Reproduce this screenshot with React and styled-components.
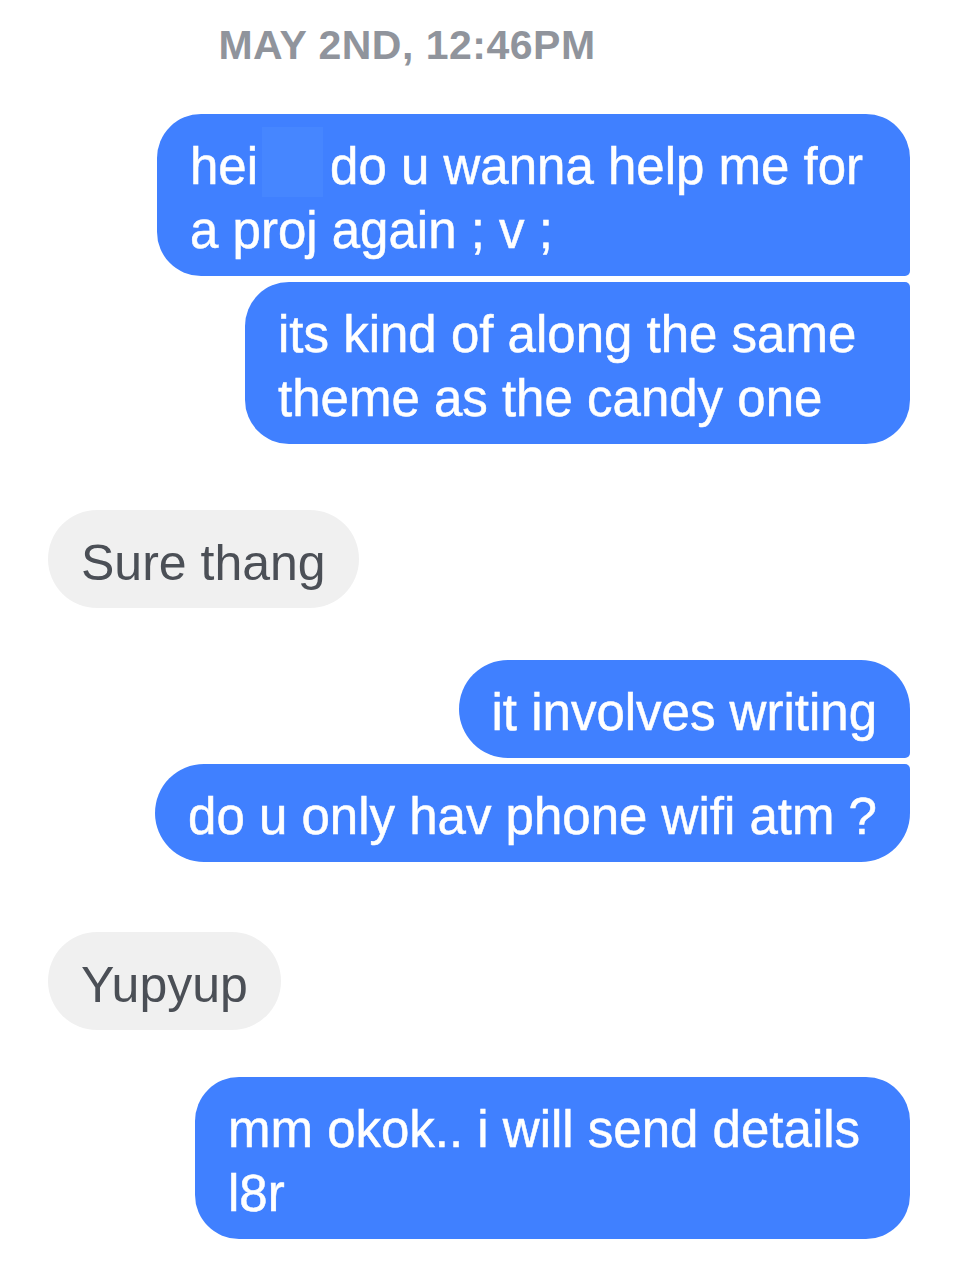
import React from "react";
import styled, { createGlobalStyle, css } from "styled-components";

const Global = createGlobalStyle`
  html, body { margin: 0; padding: 0; background: #ffffff; }
  body { font-family: "Liberation Sans", Arial, Helvetica, sans-serif; }
`;

const Thread = styled.main`
  width: 954px;
  min-height: 1270px;
  box-sizing: border-box;
  padding: 21px 44px 30px 48px;
  display: flex;
  flex-direction: column;
`;

const Timestamp = styled.div`
  align-self: stretch;
  padding-right: 144px;
  text-align: center;
  font-size: 41px;
  line-height: 48px;
  font-weight: 700;
  color: #90949c;
  letter-spacing: 0.5px;
  text-transform: uppercase;
`;

const Row = styled.div`
  display: flex;
  justify-content: ${(p) => (p.$mine ? "flex-end" : "flex-start")};
  margin-top: ${(p) => p.$gap}px;
`;

const R = 44;
const SMALL = 5;

const Bubble = styled.div`
  box-sizing: border-box;
  ${(p) => p.$w && css`width: ${p.$w}px;`}
  padding: 21px 33px 13px 33px;
  line-height: 64px;
  white-space: nowrap;
  background: ${(p) => (p.$mine ? "#4080ff" : "#f0f0f0")};
  color: ${(p) => (p.$mine ? "#ffffff" : "#4b4f56")};
  font-size: ${(p) => (p.$mine ? 51 : 50)}px;
  ${(p) => p.$mine && css`-webkit-text-stroke: 0.5px #ffffff;`}
  border-radius: ${(p) => {
    const full = p.$single ? 49 : R;
    const tr = p.$pos === "last" || p.$pos === "middle" ? SMALL : full;
    const br = p.$pos === "first" || p.$pos === "middle" ? SMALL : full;
    if (!p.$mine) return `${full}px`;
    return `${full}px ${tr}px ${br}px ${full}px`;
  }};
`;

const Redacted = styled.span`
  display: inline-block;
  width: 61px;
  height: 70px;
  margin: -8px 7px -8px 4px;
  vertical-align: top;
  background: #4686ff;
`;

export default function App() {
  return (
    <>
      <Global />
      <Thread>
        <Timestamp>May 2nd, 12:46pm</Timestamp>

        <Row $mine $gap={45}>
          <Bubble $mine $pos="first" $w={753}>
            hei<Redacted />do u wanna help me for
            <br />a proj again ; v ;
          </Bubble>
        </Row>
        <Row $mine $gap={6}>
          <Bubble $mine $pos="last" $w={665}>
            its kind of along the same
            <br />
            theme as the candy one
          </Bubble>
        </Row>

        <Row $gap={66}>
          <Bubble $single>Sure thang</Bubble>
        </Row>

        <Row $mine $gap={52}>
          <Bubble $mine $single $pos="first">
            it involves writing
          </Bubble>
        </Row>
        <Row $mine $gap={6}>
          <Bubble $mine $single $pos="last">
            do u only hav phone wifi atm ?
          </Bubble>
        </Row>

        <Row $gap={70}>
          <Bubble $single>Yupyup</Bubble>
        </Row>

        <Row $mine $gap={47}>
          <Bubble $mine $pos="single" $w={715}>
            mm okok.. i will send details
            <br />
            l8r
          </Bubble>
        </Row>
      </Thread>
    </>
  );
}
